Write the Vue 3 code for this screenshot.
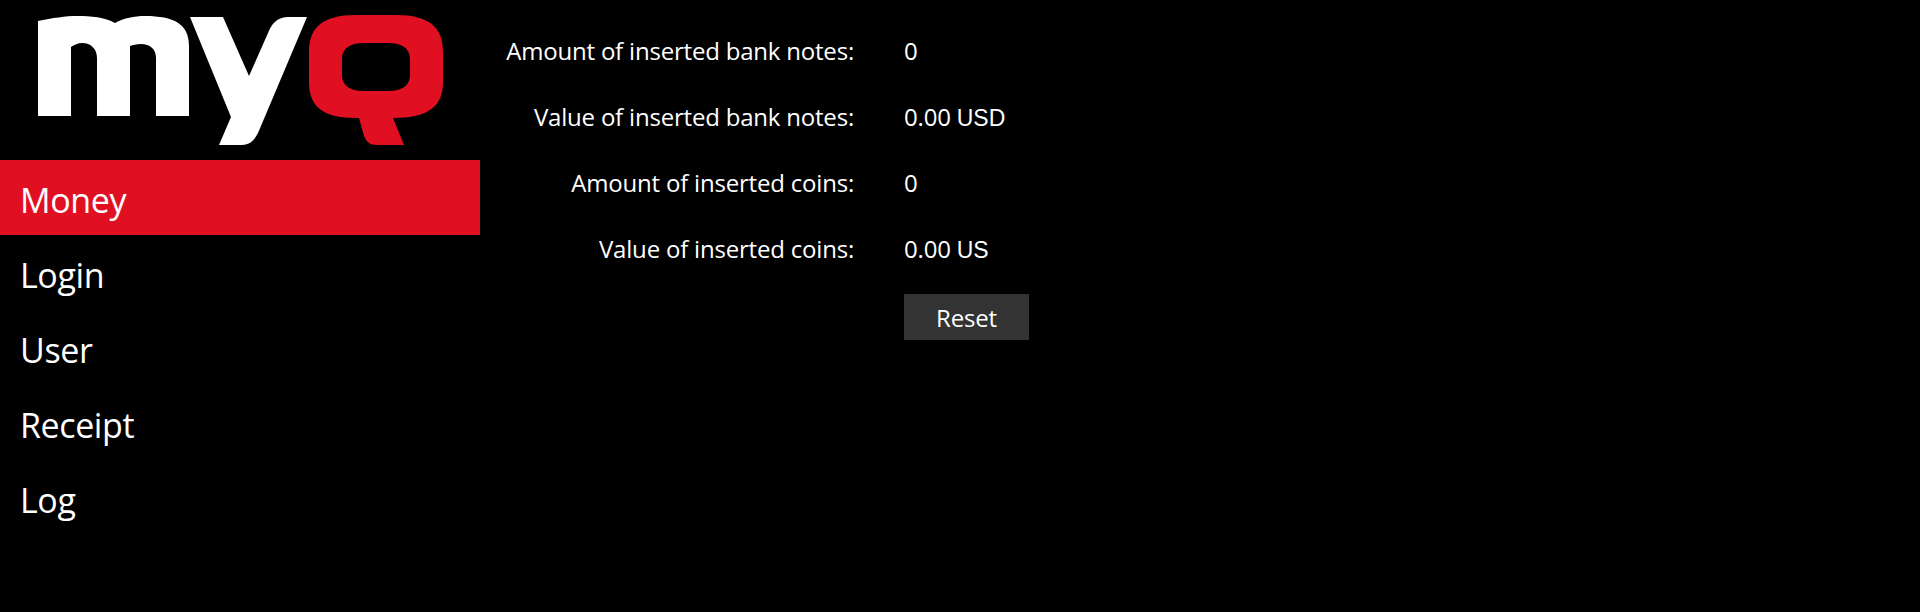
<template>
  <div class="screen">
    <aside class="sidebar">
      <div class="logo">
        <svg width="480" height="160" viewBox="0 0 480 160" xmlns="http://www.w3.org/2000/svg">
          <path fill="#fff" d="M38 21C52 18 66 16 77 16C91 16 105 17 115 23C124 18 134 16 145 16C174 16 189 24 189 46V116H156V58C156 49 150 44 141 44C136 44 133 45 130 46V116H97V58C97 49 91 43 82 43C78 43 74 45 71 47V116H38Z" />
          <path fill="#fff" d="M190 17H223L249 76L268 33C272 23 277 18 287 17H307L258 133C253 142 250 145 238 145H219L231 117Z" />
          <path fill="#e01022" fill-rule="evenodd" d="M356 15H396C430 15 443 28 443 52V82C443 106 429 118 393 118L404 145H377C369 145 367 142 364 136L359 118H356C322 118 309 106 309 82V52C309 28 322 15 356 15ZM364 43C349 43 342 49 342 59V75C342 85 349 91 364 91H388C403 91 410 85 410 75V59C410 49 403 43 388 43Z" />
        </svg>
      </div>
      <nav class="menu">
        <a v-for="item in menu" :key="item" class="menu-item" :class="{ active: item === current }">{{ item }}</a>
      </nav>
    </aside>
    <main class="content">
      <div class="stats">
        <template v-for="row in rows" :key="row.label">
          <div class="label">{{ row.label }}</div>
          <div class="value">{{ row.value }} <span v-if="row.unit" class="unit">{{ row.unit }}</span></div>
        </template>
        <div></div>
        <div class="actions"><button class="reset">Reset</button></div>
      </div>
    </main>
  </div>
</template>

<script setup>
const menu = ["Money", "Login", "User", "Receipt", "Log"];
const current = "Money";

const rows = [
  { label: "Amount of inserted bank notes:", value: "0" },
  { label: "Value of inserted bank notes:", value: "0.00", unit: "USD" },
  { label: "Amount of inserted coins:", value: "0" },
  { label: "Value of inserted coins:", value: "0.00", unit: "US" },
];
</script>

<style>
html,
body {
  margin: 0;
  background: #000;
}
</style>

<style scoped>
.screen {
  display: flex;
  width: 1920px;
  height: 612px;
  background: #000;
  color: #fff;
  font-family: "Open Sans", "Noto Sans", sans-serif;
  overflow: hidden;
}

.sidebar {
  width: 480px;
  flex-shrink: 0;
}

.logo {
  height: 160px;
}

.logo svg {
  display: block;
}

.menu-item {
  display: block;
  height: 71px;
  padding: 4px 0 0 20px;
  font-size: 34px;
  line-height: 73px;
  letter-spacing: -0.4px;
}

.menu-item.active {
  background: #e01022;
}

.content {
  flex: 1;
  padding-top: 18px;
}

.stats {
  display: grid;
  grid-template-columns: 374px 1fr;
  column-gap: 50px;
  grid-auto-rows: 66px;
  font-size: 24px;
  line-height: 66px;
  letter-spacing: -0.2px;
}

.label {
  text-align: right;
}

.unit {
  font-family: "Liberation Sans", sans-serif;
  font-size: 23px;
  letter-spacing: 0;
}

.actions {
  padding-top: 12px;
}

.reset {
  display: block;
  width: 125px;
  height: 46px;
  padding: 2px 0 0;
  border: 0;
  background: #333;
  color: #fff;
  font: inherit;
  line-height: 44px;
  letter-spacing: inherit;
}
</style>
